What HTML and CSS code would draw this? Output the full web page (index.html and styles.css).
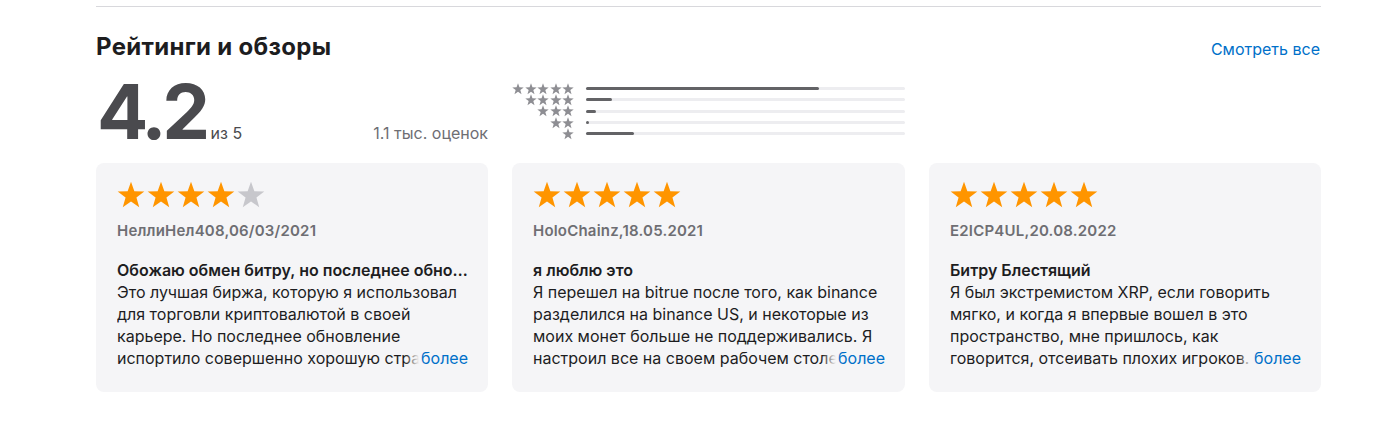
FILE: index.html
```html
<!DOCTYPE html>
<html lang="ru">
<head>
<meta charset="utf-8">
<link rel="stylesheet" href="styles.css">
</head>
<body>
<svg class="defs" width="0" height="0" aria-hidden="true">
  <symbol id="star" viewBox="0 0 24 24">
    <polygon points="12,0.7 14.88,8.74 23.41,8.99 16.66,14.21 19.05,22.41 12,17.6 4.95,22.41 7.34,14.21 0.59,8.99 9.12,8.74"/>
  </symbol>
</svg>
<section class="ratings">
  <div class="header">
    <h2 class="title">Рейтинги и обзоры</h2>
    <a class="see-all" href="#">Смотреть все</a>
  </div>
  <div class="summary">
    <div class="average">
      <span class="score">4.2</span>
      <span class="out-of">из 5</span>
      <span class="count">1.1 тыс. оценок</span>
    </div>
    <div class="histogram">
      <div class="hrow">
        <span class="hstars"><svg><use href="#star"/></svg><svg><use href="#star"/></svg><svg><use href="#star"/></svg><svg><use href="#star"/></svg><svg><use href="#star"/></svg></span>
        <span class="bar"><span class="fill" style="width:73%"></span></span>
      </div>
      <div class="hrow">
        <span class="hstars"><svg><use href="#star"/></svg><svg><use href="#star"/></svg><svg><use href="#star"/></svg><svg><use href="#star"/></svg></span>
        <span class="bar"><span class="fill" style="width:8%"></span></span>
      </div>
      <div class="hrow">
        <span class="hstars"><svg><use href="#star"/></svg><svg><use href="#star"/></svg><svg><use href="#star"/></svg></span>
        <span class="bar"><span class="fill" style="width:3%"></span></span>
      </div>
      <div class="hrow">
        <span class="hstars"><svg><use href="#star"/></svg><svg><use href="#star"/></svg></span>
        <span class="bar"><span class="fill" style="width:1%"></span></span>
      </div>
      <div class="hrow">
        <span class="hstars"><svg><use href="#star"/></svg></span>
        <span class="bar"><span class="fill" style="width:15%"></span></span>
      </div>
    </div>
  </div>
  <div class="cards">
    <article class="card">
      <div class="stars"><svg><use href="#star"/></svg><svg><use href="#star"/></svg><svg><use href="#star"/></svg><svg><use href="#star"/></svg><svg class="off"><use href="#star"/></svg></div>
      <div class="author">НеллиНел408,06/03/2021</div>
      <h3 class="rtitle">Обожаю обмен битру, но последнее обновление испортило всё</h3>
      <div class="body">
        <p>Это лучшая биржа, которую я использовал для торговли криптовалютой в своей карьере. Но последнее обновление испортило совершенно хорошую страницу торговли и сделало её неудобной.</p>
        <a class="more" href="#">более</a>
      </div>
    </article>
    <article class="card">
      <div class="stars"><svg><use href="#star"/></svg><svg><use href="#star"/></svg><svg><use href="#star"/></svg><svg><use href="#star"/></svg><svg><use href="#star"/></svg></div>
      <div class="author">HoloChainz,18.05.2021</div>
      <h3 class="rtitle">я люблю это</h3>
      <div class="body">
        <p>Я перешел на bitrue после того, как binance разделился на binance US, и некоторые из моих монет больше не поддерживались. Я настроил все на своем рабочем столе и телефоне.</p>
        <a class="more" href="#">более</a>
      </div>
    </article>
    <article class="card">
      <div class="stars"><svg><use href="#star"/></svg><svg><use href="#star"/></svg><svg><use href="#star"/></svg><svg><use href="#star"/></svg><svg><use href="#star"/></svg></div>
      <div class="author">E2ICP4UL,20.08.2022</div>
      <h3 class="rtitle">Битру Блестящий</h3>
      <div class="body">
        <p>Я был экстремистом XRP, если говорить мягко, и когда я впервые вошел в это пространство, мне пришлось, как говорится, отсеивать плохих игроков. Битру оказался одним из лучших.</p>
        <a class="more" href="#">более</a>
      </div>
    </article>
  </div>
</section>
</body>
</html>
```
FILE: styles.css
```css
* { box-sizing: border-box; }
html, body { margin: 0; padding: 0; background: #fff; }
body {
  font-family: Inter, "Liberation Sans", Arial, sans-serif;
  color: #1d1d1f;
  -webkit-font-smoothing: antialiased;
}
.defs { position: absolute; width: 0; height: 0; }

.ratings {
  width: 1225px;
  margin-left: 96px;
  margin-top: 6px;
  border-top: 1px solid #d8d8dc;
}

.header {
  display: flex;
  justify-content: space-between;
  align-items: baseline;
  padding-top: 25px;
}
.title {
  margin: 0;
  font-size: 24px;
  line-height: 30px;
  font-weight: 700;
  letter-spacing: 0.3px;
  color: #1d1d1f;
}
.see-all {
  font-size: 16px;
  color: #0070c9;
  text-decoration: none;
  padding-right: 1px;
}

.summary {
  display: grid;
  grid-template-columns: 392px 393px;
  column-gap: 24px;
  margin-top: 19px;
  height: 61px;
}
.average {
  display: flex;
  align-items: baseline;
  height: 60px;
}
.score {
  font-size: 76px;
  line-height: 60px;
  font-weight: 700;
  letter-spacing: -4.5px;
  color: #4a4a4e;
  margin-left: 1px;
}
.out-of {
  font-size: 16px;
  color: #4a4a4e;
  margin-left: 5px;
}
.count {
  margin-left: auto;
  font-size: 16px;
  color: #6e6e73;
}

.histogram {
  display: flex;
  flex-direction: column;
  padding-top: 2px;
}
.hrow {
  display: flex;
  align-items: center;
  height: 11.3px;
}
.hstars {
  width: 62px;
  display: flex;
  justify-content: flex-end;
  gap: 0.5px;
  fill: #8e8e93;
}
.hstars svg { width: 12px; height: 12px; }
.bar {
  margin-left: 12px;
  flex: 1;
  height: 3px;
  background: #ededf0;
  border-radius: 2px;
  display: flex;
}
.fill {
  height: 3px;
  background: #636366;
  border-radius: 2px;
}

.cards {
  display: grid;
  grid-template-columns: 392px 393px 392px;
  column-gap: 24px;
  margin-top: 21px;
}
.card {
  background: #f5f5f7;
  border-radius: 8px;
  padding: 18px 20px 23px 21px;
  height: 229px;
}
.stars {
  display: flex;
  gap: 2px;
  fill: #ff9500;
  height: 27px;
}
.stars svg { width: 28px; height: 28px; }
.stars svg.off { fill: #c7c7cc; }
.author {
  margin-top: 13px;
  font-size: 15px;
  line-height: 20px;
  font-weight: 600;
  letter-spacing: 0.2px;
  color: #6e6e73;
}
.rtitle {
  margin: 18px 0 0;
  font-size: 16px;
  line-height: 22px;
  font-weight: 600;
  color: #1d1d1f;
  white-space: nowrap;
  overflow: hidden;
  text-overflow: ellipsis;
}
.body {
  position: relative;
  height: 88px;
  overflow: hidden;
}
.body p {
  margin: 0;
  font-size: 16px;
  line-height: 22px;
  color: #1d1d1f;
}
.more {
  position: absolute;
  right: 0;
  bottom: 0;
  line-height: 22px;
  font-size: 16px;
  color: #0070c9;
  text-decoration: none;
  padding-left: 16px;
  background: linear-gradient(to right, rgba(245,245,247,0) 0, #f5f5f7 14px);
}
```
